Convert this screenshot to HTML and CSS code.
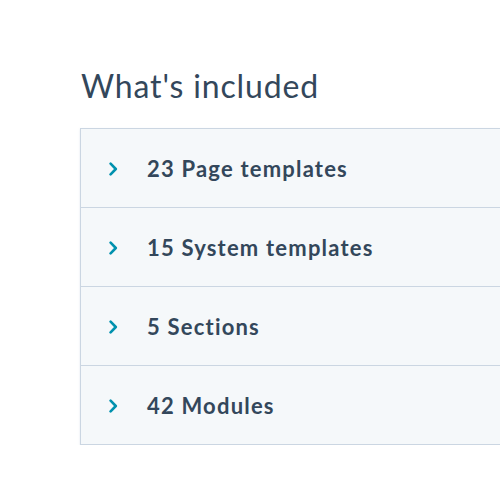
FILE: index.html
```html
<!DOCTYPE html>
<html lang="en">
<head>
<meta charset="utf-8">
<link rel="stylesheet" href="styles.css">
</head>
<body>
<main class="page">
  <h2 class="title">What's included</h2>
  <ul class="accordion">
    <li class="item"><svg class="chev" viewBox="0 0 9 14" width="9" height="14"><path d="M1.6 1.6 L6.8 7 L1.6 12.4" fill="none" stroke="currentColor" stroke-width="2.6" stroke-linecap="round" stroke-linejoin="round"/></svg><span class="label">23 Page templates</span></li>
    <li class="item"><svg class="chev" viewBox="0 0 9 14" width="9" height="14"><path d="M1.6 1.6 L6.8 7 L1.6 12.4" fill="none" stroke="currentColor" stroke-width="2.6" stroke-linecap="round" stroke-linejoin="round"/></svg><span class="label">15 System templates</span></li>
    <li class="item"><svg class="chev" viewBox="0 0 9 14" width="9" height="14"><path d="M1.6 1.6 L6.8 7 L1.6 12.4" fill="none" stroke="currentColor" stroke-width="2.6" stroke-linecap="round" stroke-linejoin="round"/></svg><span class="label">5 Sections</span></li>
    <li class="item"><svg class="chev" viewBox="0 0 9 14" width="9" height="14"><path d="M1.6 1.6 L6.8 7 L1.6 12.4" fill="none" stroke="currentColor" stroke-width="2.6" stroke-linecap="round" stroke-linejoin="round"/></svg><span class="label">42 Modules</span></li>
  </ul>
</main>
</body>
</html>
```
FILE: styles.css
```css
html, body {
  margin: 0;
  padding: 0;
  background: #ffffff;
  overflow: hidden;
}
.page {
  padding: 66px 0 0 80px;
  font-family: Lato, "Noto Sans", sans-serif;
  color: #2d3e50;
}
.title {
  margin: 0 0 22px 1px;
  font-size: 32px;
  line-height: 40px;
  font-weight: 400;
  letter-spacing: 0.85px;
  color: #33475b;
}
.accordion {
  list-style: none;
  margin: 0;
  padding: 0;
  border: 1px solid #cbd6e2;
  border-right: none;
  box-shadow: 0 1px 2px rgba(203, 214, 226, 0.6);
}
.item {
  display: flex;
  align-items: center;
  height: 78px;
  background: #f5f8fa;
  border-top: 1px solid #cbd6e2;
}
.item:first-child {
  border-top: none;
}
.chev {
  margin-left: 28px;
  margin-top: 2px;
  color: #0091ae;
  flex: none;
}
.label {
  margin-left: 29px;
  font-size: 22px;
  font-weight: 700;
  letter-spacing: 1.2px;
  color: #33475b;
}
```
